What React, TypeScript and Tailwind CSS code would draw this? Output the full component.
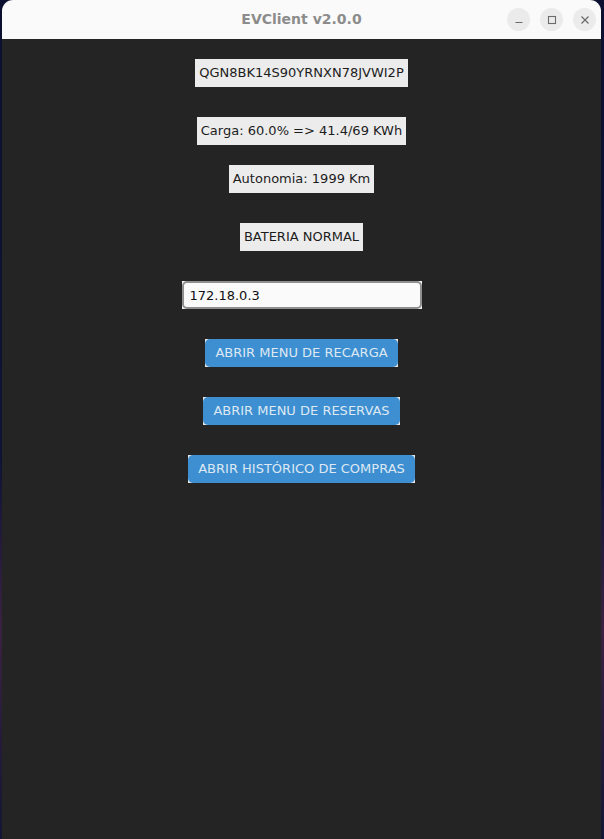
import React, { useState } from 'react';

const font = { fontFamily: '"DejaVu Sans", "Liberation Sans", sans-serif' };

function InfoLabel({ text, className = '' }: { text: string; className?: string }) {
  return (
    <div className={`h-[28px] px-[4px] flex items-center bg-[#ececec] text-[13px] text-[#1c1c1c] ${className}`}>
      {text}
    </div>
  );
}

function ActionButton({ text, className = '' }: { text: string; className?: string }) {
  return (
    <div className={`bg-[#e6e6e6] ${className}`}>
      <button className="h-[28px] px-[10px] flex items-center rounded-[5px] bg-[#3d8fd1] text-[13px] text-[#dde8f3]">
        {text}
      </button>
    </div>
  );
}

export default function App() {
  const [ip, setIp] = useState('172.18.0.3');

  return (
    <div className="w-[604px] h-[839px] overflow-hidden bg-[linear-gradient(180deg,#0b1030_0%,#0f1436_55%,#3a2240_75%,#121634_100%)]">
      <div className="ml-[2px] w-[599px] h-[839px] flex flex-col rounded-t-[11px] overflow-hidden" style={font}>
        {/* Title bar */}
        <div className="h-[39px] shrink-0 bg-[#fafafa] relative flex items-center justify-center">
          <span className="text-[14px] font-bold text-[#8c8c8c]">EVClient v2.0.0</span>
          <div className="absolute right-[5px] top-[8px] flex gap-[10px]">
            <div className="w-[23px] h-[23px] rounded-full bg-[#ebebeb] flex items-center justify-center">
              <svg width="10" height="10" viewBox="0 0 10 10"><path d="M1.5 7.5h7" stroke="#6b6b6b" strokeWidth="1.2" /></svg>
            </div>
            <div className="w-[23px] h-[23px] rounded-full bg-[#ebebeb] flex items-center justify-center">
              <svg width="10" height="10" viewBox="0 0 10 10"><rect x="1.5" y="1.5" width="7" height="7" fill="none" stroke="#6b6b6b" strokeWidth="1.1" /></svg>
            </div>
            <div className="w-[23px] h-[23px] rounded-full bg-[#ebebeb] flex items-center justify-center">
              <svg width="10" height="10" viewBox="0 0 10 10"><path d="M1.5 1.5l7 7M8.5 1.5l-7 7" stroke="#6b6b6b" strokeWidth="1.2" /></svg>
            </div>
          </div>
        </div>

        {/* Content */}
        <div className="flex-1 bg-[#242424] flex flex-col items-center pt-[20px]">
          <InfoLabel text="QGN8BK14S90YRNXN78JVWI2P" />
          <InfoLabel text="Carga: 60.0% => 41.4/69 KWh" className="mt-[30px]" />
          <InfoLabel text="Autonomia: 1999 Km" className="mt-[20px]" />
          <InfoLabel text="BATERIA NORMAL" className="mt-[30px]" />

          <div className="mt-[30px] bg-[#f4f4f4]">
            <input
              value={ip}
              onChange={(e) => setIp(e.target.value)}
              className="w-[240px] h-[28px] px-[6px] rounded-[5px] border-2 border-[#8f8f8f] bg-[#fafafa] text-[13px] text-[#111] outline-none"
              style={font}
            />
          </div>

          <ActionButton text="ABRIR MENU DE RECARGA" className="mt-[30px]" />
          <ActionButton text="ABRIR MENU DE RESERVAS" className="mt-[30px]" />
          <ActionButton text="ABRIR HISTÓRICO DE COMPRAS" className="mt-[30px]" />
        </div>
      </div>
    </div>
  );
}
